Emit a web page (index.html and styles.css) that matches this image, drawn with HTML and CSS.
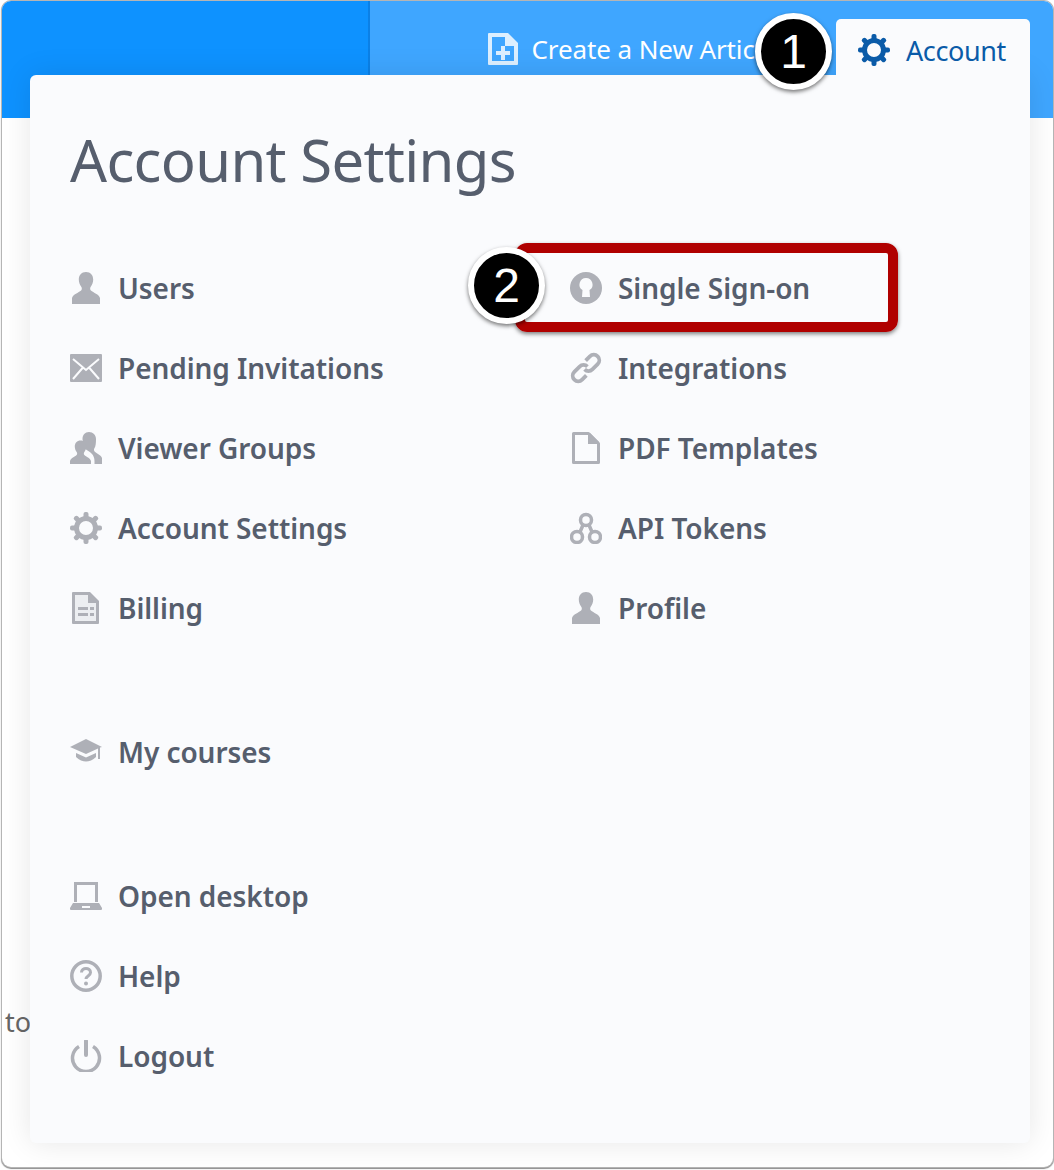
FILE: index.html
```html
<!DOCTYPE html>
<html lang="en">
<head>
  <meta charset="UTF-8">
  <meta name="viewport" content="width=device-width, initial-scale=1.0">
  <title>Account Settings</title>
  <link rel="stylesheet" href="styles.css">
</head>
<body>
  <svg class="icon-defs" aria-hidden="true">
    <symbol id="i-user" viewBox="0 0 32 32">
      <path fill="currentColor" d="M16 0c-4.600 0-7.200 3.200-7.200 7.600 0 2.800 1 5.500 2.600 7.300.6.800.6 2.800-.3 3.600C8.600 20.700 3 22.400 2 26v6h28v-6c-1-3.600-6.600-5.300-9.100-7.500-.9-.8-.9-2.800-.3-3.600 1.600-1.800 2.600-4.500 2.600-7.300C23.200 3.200 20.600 0 16 0z"/>
    </symbol>
    <symbol id="i-gear" viewBox="0 0 32 32">
      <g fill="currentColor">
        <rect x="13.500" y="0" width="5" height="8" rx="2"/>
        <rect x="13.500" y="0" width="5" height="8" rx="2" transform="rotate(45 16 16)"/>
        <rect x="13.500" y="0" width="5" height="8" rx="2" transform="rotate(90 16 16)"/>
        <rect x="13.500" y="0" width="5" height="8" rx="2" transform="rotate(135 16 16)"/>
        <rect x="13.500" y="0" width="5" height="8" rx="2" transform="rotate(180 16 16)"/>
        <rect x="13.500" y="0" width="5" height="8" rx="2" transform="rotate(225 16 16)"/>
        <rect x="13.500" y="0" width="5" height="8" rx="2" transform="rotate(270 16 16)"/>
        <rect x="13.500" y="0" width="5" height="8" rx="2" transform="rotate(315 16 16)"/>
      </g>
      <circle cx="16" cy="16" r="9.500" fill="none" stroke="currentColor" stroke-width="5"/>
    </symbol>
  </svg>

  <div class="window">
    <header class="topbar">
      <div class="topbar-left"></div>
      <div class="topbar-right">
        <a class="new-article" href="#">
          <svg class="new-article-icon" viewBox="0 0 30 32">
            <path fill="#dcefff" d="M1 0h19l10 10v21a1 1 0 0 1-1 1H1a1 1 0 0 1-1-1V1a1 1 0 0 1 1-1z"/>
            <path fill="#3fa6ff" d="M4 4h13v9h9v15H4z"/>
            <path fill="#dcefff" d="M13 13h4v5h5v4h-5v5h-4v-5H8v-4h5z"/>
          </svg>
          Create a New Article
        </a>
        <a class="account-tab" href="#">
          <svg class="account-tab-icon"><use href="#i-gear"/></svg>
          Account
        </a>
      </div>
    </header>
    <div class="page-text">to</div>
  </div>

  <div class="panel">
    <h1 class="panel-title">Account Settings</h1>

    <div class="menu-columns">
      <ul class="menu">
        <li class="menu-item">
          <svg class="menu-icon"><use href="#i-user"/></svg>
          Users
        </li>
        <li class="menu-item">
          <svg class="menu-icon" viewBox="0 0 32 32">
            <rect y="2" width="32" height="28" rx="1" fill="currentColor"/>
            <path d="M3 7l13 11L29 7M3 27l10-11.500M29 27L19 15.500" fill="none" stroke="#fafbfd" stroke-width="2"/>
          </svg>
          Pending Invitations
        </li>
        <li class="menu-item">
          <svg class="menu-icon" viewBox="0 0 32 32">
            <path fill="currentColor" d="M19 0c-4 0-6.500 3-6.500 7 0 2.500 1 5 2.300 6.500.5.700.5 2.300-.2 3 3 2 5.500 3.500 7.400 5.500 1.400 1.500 2.500 4 2.500 7V32H32v-6c-.8-3-5.300-4.500-7.400-6.500-.8-.7-.8-2.500-.2-3.200C25.700 14.700 26 11 26 7c0-4-3-7-7-7z"/>
            <path fill="currentColor" d="M10.500 8.500c-3.500 0-5.700 2.600-5.700 6 0 2.200.8 4.300 2 5.700.5.700.5 2.200-.2 2.800C4.800 24.800.8 26 0 29v3h21v-3c-.8-3-4.800-4.200-6.600-6-.7-.6-.7-2.100-.2-2.800 1.200-1.400 2-3.500 2-5.700 0-3.400-2.200-6-5.700-6z"/>
          </svg>
          Viewer Groups
        </li>
        <li class="menu-item">
          <svg class="menu-icon"><use href="#i-gear"/></svg>
          Account Settings
        </li>
        <li class="menu-item">
          <svg class="menu-icon" viewBox="0 0 32 32">
            <path fill="currentColor" d="M3 0h17l9 9v22a1 1 0 0 1-1 1H3a1 1 0 0 1-1-1V1a1 1 0 0 1 1-1z"/>
            <path fill="#eceef1" d="M5 3h13v8h8v18H5z"/>
            <path fill="currentColor" d="M8 15h10v3H8zM20 15h4v3h-4zM8 21h10v3H8zM20 21h4v3h-4z"/>
          </svg>
          Billing
        </li>
      </ul>

      <ul class="menu">
        <li class="menu-item">
          <svg class="menu-icon" viewBox="0 0 32 32">
            <circle cx="16" cy="16" r="16" fill="currentColor"/>
            <path fill="#fafbfd" d="M16 6a6.500 6.500 0 0 1 3.500 12l.5 7h-8l.5-7A6.500 6.500 0 0 1 16 6z"/>
          </svg>
          Single Sign-on
        </li>
        <li class="menu-item">
          <svg class="menu-icon" viewBox="0 0 32 32">
            <g transform="rotate(-45 16 16)" fill="none" stroke="currentColor" stroke-width="3.800">
              <path d="M18 16a5.500 5.500 0 0 0-5.500-5.500H5a5.500 5.500 0 0 0 0 11h6"/>
              <path d="M14 16a5.500 5.500 0 0 0 5.500 5.500H27a5.500 5.500 0 0 0 0-11h-6"/>
            </g>
          </svg>
          Integrations
        </li>
        <li class="menu-item">
          <svg class="menu-icon" viewBox="0 0 32 32">
            <path fill="#fafbfd" stroke="currentColor" stroke-width="3" stroke-linejoin="round" d="M3.500 1.500h15l10 10v19h-25z"/>
            <path fill="currentColor" d="M18 1h2l9 9v2H18z"/>
          </svg>
          PDF Templates
        </li>
        <li class="menu-item">
          <svg class="menu-icon" viewBox="0 0 32 32">
            <g fill="none" stroke="currentColor" stroke-width="3.500">
              <circle cx="16" cy="8" r="5.500"/>
              <circle cx="7" cy="25" r="5.500"/>
              <circle cx="25" cy="25" r="5.500"/>
              <path d="M13 13l-3 7M19 13l3 7"/>
            </g>
          </svg>
          API Tokens
        </li>
        <li class="menu-item">
          <svg class="menu-icon"><use href="#i-user"/></svg>
          Profile
        </li>
      </ul>
    </div>

    <ul class="menu menu-group">
      <li class="menu-item">
        <svg class="menu-icon" viewBox="0 0 32 32">
          <path fill="currentColor" d="M16 3L0 11l16 7 12-5.500V23h2V11.500l2-.5z"/>
          <path fill="currentColor" d="M6 17v4c3 3 7 4.500 10 4.500s7-1.500 10-4.500v-4l-10 4.500z"/>
        </svg>
        My courses
      </li>
    </ul>

    <ul class="menu menu-group">
      <li class="menu-item">
        <svg class="menu-icon" viewBox="0 0 32 32">
          <path fill="currentColor" d="M4 2h24v20h-3V5H7v17H4z"/>
          <path fill="currentColor" d="M3 23h26l3 5v1a1 1 0 0 1-1 1H1a1 1 0 0 1-1-1v-1zM12 26v2h8v-2z" fill-rule="evenodd"/>
        </svg>
        Open desktop
      </li>
      <li class="menu-item">
        <svg class="menu-icon" viewBox="0 0 32 32">
          <circle cx="16" cy="16" r="14.200" fill="none" stroke="currentColor" stroke-width="3.500"/>
          <path d="M11.500 12.500c0-5.500 9-5.500 9 0 0 3.500-4.500 3.500-4.500 6.500" fill="none" stroke="currentColor" stroke-width="3"/>
          <circle cx="16" cy="23.500" r="2" fill="currentColor"/>
        </svg>
        Help
      </li>
      <li class="menu-item">
        <svg class="menu-icon" viewBox="0 0 32 32">
          <path d="M9 6.500a13.500 13.500 0 1 0 14 0" fill="none" stroke="currentColor" stroke-width="3.500"/>
          <path d="M16 1v14" fill="none" stroke="currentColor" stroke-width="4" stroke-linecap="round"/>
        </svg>
        Logout
      </li>
    </ul>
  </div>

  <!-- callouts on top of the screenshot -->
  <div class="callout-box"></div>
  <div class="callout callout-1">1</div>
  <div class="callout callout-2">2</div>
</body>
</html>
```

FILE: styles.css
```css
* {
  box-sizing: border-box;
}

body {
  font-family: "Noto Sans", Arial, sans-serif;
  margin: 0;
  padding: 1px 1px 3px 2px;
  height: 1170px;
  background-color: #fff;
  color: #565e6d;
  overflow: hidden;
}

.icon-defs {
  display: none;
}

.window {
  height: 100%;
  background: #fff;
  border-radius: 9px;
  box-shadow: 0 0 0 1px #b5b5b5, 0 1px 1px 1px #8c8c8c;
  overflow: hidden;
}

/* Top bar */
.topbar {
  display: flex;
  height: 117px;
}

.topbar-left {
  width: 368px;
  background-color: #0e92ff;
  border-right: 2px solid #0b80e6;
}

.topbar-right {
  flex: 1;
  display: flex;
  justify-content: flex-end;
  background-color: #3fa6ff;
  padding: 18px 23px 0 0;
}

.new-article {
  display: flex;
  align-items: center;
  gap: 14px;
  height: 60px;
  margin-right: 60px;
  color: #fff;
  font-size: 26px;
  letter-spacing: -0.1px;
  text-decoration: none;
}

.new-article-icon {
  width: 30px;
  height: 32px;
}

.account-tab {
  position: relative;
  z-index: 1;
  display: flex;
  align-items: center;
  gap: 16px;
  width: 194px;
  height: 66px;
  padding: 0 0 4px 22px;
  background-color: #fafbfd;
  border-radius: 5px 5px 0 0;
  color: #0a5ba8;
  font-size: 27px;
  letter-spacing: -0.4px;
  text-decoration: none;
}

.account-tab-icon {
  width: 32px;
  height: 32px;
}

.page-text {
  margin-top: 884px;
  padding-left: 3px;
  font-size: 27px;
  line-height: 40px;
  color: #666;
}

/* Account panel */
.panel {
  position: absolute;
  top: 75px;
  left: 30px;
  width: 1000px;
  height: 1068px;
  padding: 45px 40px 0;
  background-color: #fafbfd;
  border-radius: 6px;
  box-shadow: 0 0 30px rgba(0, 0, 0, 0.1);
}

.panel-title {
  margin: 0 0 48px;
  font-size: 58px;
  font-weight: 400;
  line-height: 80px;
  letter-spacing: -0.65px;
}

.menu-columns {
  display: flex;
}

.menu-columns .menu {
  flex: none;
  width: 500px;
}

.menu {
  list-style: none;
  margin: 0;
  padding: 0;
}

.menu-group {
  margin-top: 64px;
}

.menu-item {
  display: flex;
  align-items: center;
  gap: 16px;
  height: 80px;
  font-size: 28px;
  font-weight: 600;
  letter-spacing: -0.07px;
}

.menu-icon {
  flex: none;
  width: 32px;
  height: 32px;
  color: #aeb0b7;
}

/* Callouts */
.callout {
  position: absolute;
  display: flex;
  align-items: center;
  justify-content: center;
  width: 77px;
  height: 77px;
  background-color: #000;
  border: 6px solid #fff;
  border-radius: 50%;
  box-shadow: 0 2px 4px rgba(0, 0, 0, 0.55);
  color: #fff;
  font-family: "Liberation Sans", Arial, sans-serif;
  font-size: 48px;
}

.callout-1 {
  top: 13px;
  left: 755px;
}

.callout-2 {
  top: 247px;
  left: 468px;
}

.callout-box {
  position: absolute;
  top: 243px;
  left: 515px;
  width: 383px;
  height: 89px;
  border: 10px solid #b00000;
  border-radius: 12px;
  box-shadow: 0 2px 4px rgba(0, 0, 0, 0.5);
}
```
